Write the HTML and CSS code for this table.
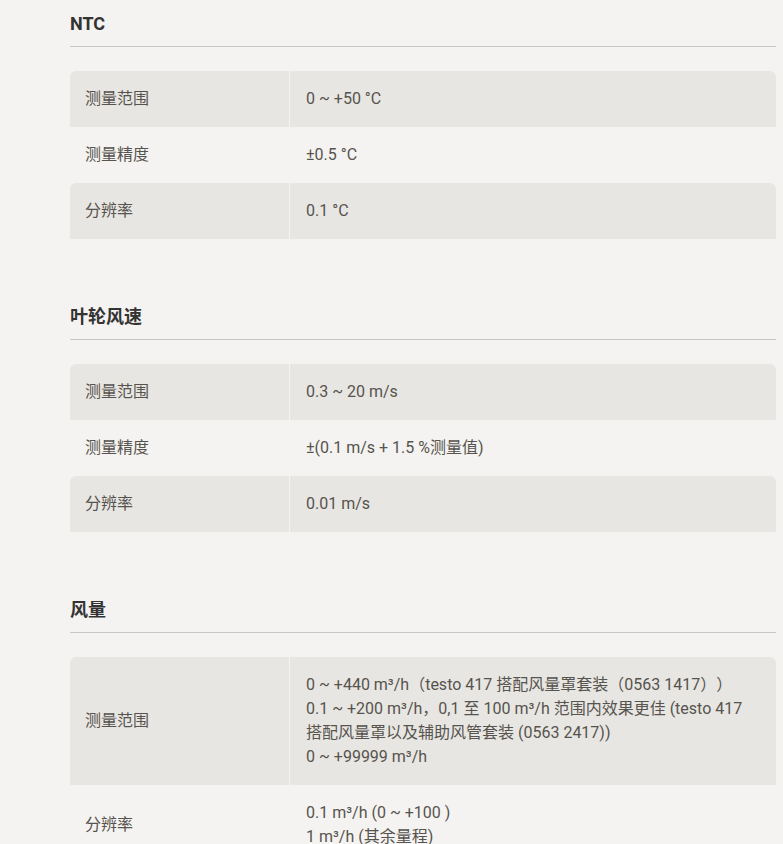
FILE: index.html
```html
<!DOCTYPE html>
<html lang="zh-CN">
<head>
<meta charset="UTF-8">
<meta name="viewport" content="width=device-width, initial-scale=1.0">
<title>技术数据</title>
<link rel="stylesheet" href="styles.css">
</head>
<body>
<div class="container">
  <div class="spec-section">
    <h2>NTC</h2>
    <table class="spec-table">
      <tr><td>测量范围</td><td>0 ~ +50 °C</td></tr>
      <tr><td>测量精度</td><td>±0.5 °C</td></tr>
      <tr><td>分辨率</td><td>0.1 °C</td></tr>
    </table>
  </div>
  <div class="spec-section">
    <h2>叶轮风速</h2>
    <table class="spec-table">
      <tr><td>测量范围</td><td>0.3 ~ 20 m/s</td></tr>
      <tr><td>测量精度</td><td>±(0.1 m/s + 1.5 %测量值)</td></tr>
      <tr><td>分辨率</td><td>0.01 m/s</td></tr>
    </table>
  </div>
  <div class="spec-section">
    <h2>风量</h2>
    <table class="spec-table">
      <tr>
        <td>测量范围</td>
        <td>0 ~ +440 m³/h（testo 417 搭配风量罩套装（0563 1417））<br>0.1 ~ +200 m³/h，0,1 至 100 m³/h 范围内效果更佳 (testo 417 搭配风量罩以及辅助风管套装 (0563 2417))<br>0 ~ +99999 m³/h</td>
      </tr>
      <tr>
        <td>分辨率</td>
        <td>0.1 m³/h (0 ~ +100 )<br>1 m³/h (其余量程)</td>
      </tr>
    </table>
  </div>
</div>
</body>
</html>
```

FILE: styles.css
```css
body {
  margin: 0;
  background-color: #f4f3f1;
  font-family: Roboto, "Noto Sans CJK SC", sans-serif;
  color: #57534e;
}
.container {
  padding: 0 7px 0 70px;
}
.spec-section {
  margin-bottom: 54px;
}
.spec-section h2 {
  margin: 0;
  padding: 11px 0 9px;
  font-size: 18px;
  line-height: 26px;
  font-weight: 700;
  color: #333;
  border-bottom: 1px solid #c9c7c4;
}
.spec-table {
  width: 100%;
  margin-top: 24px;
  border-collapse: separate;
  border-spacing: 0;
  font-size: 16px;
  line-height: 24px;
  text-spacing-trim: space-all;
}
.spec-table td {
  padding: 16px 15px 16px 16px;
  vertical-align: middle;
}
.spec-table td:first-child {
  width: 189px;
  padding-left: 15px;
  border-right: 1px solid #f4f3f1;
}
.spec-table tr:nth-child(odd) td {
  background-color: #e7e6e2;
}
.spec-table tr:nth-child(odd) td:first-child {
  border-top-left-radius: 6px;
}
.spec-table tr:nth-child(odd) td:last-child {
  border-top-right-radius: 6px;
}
```
